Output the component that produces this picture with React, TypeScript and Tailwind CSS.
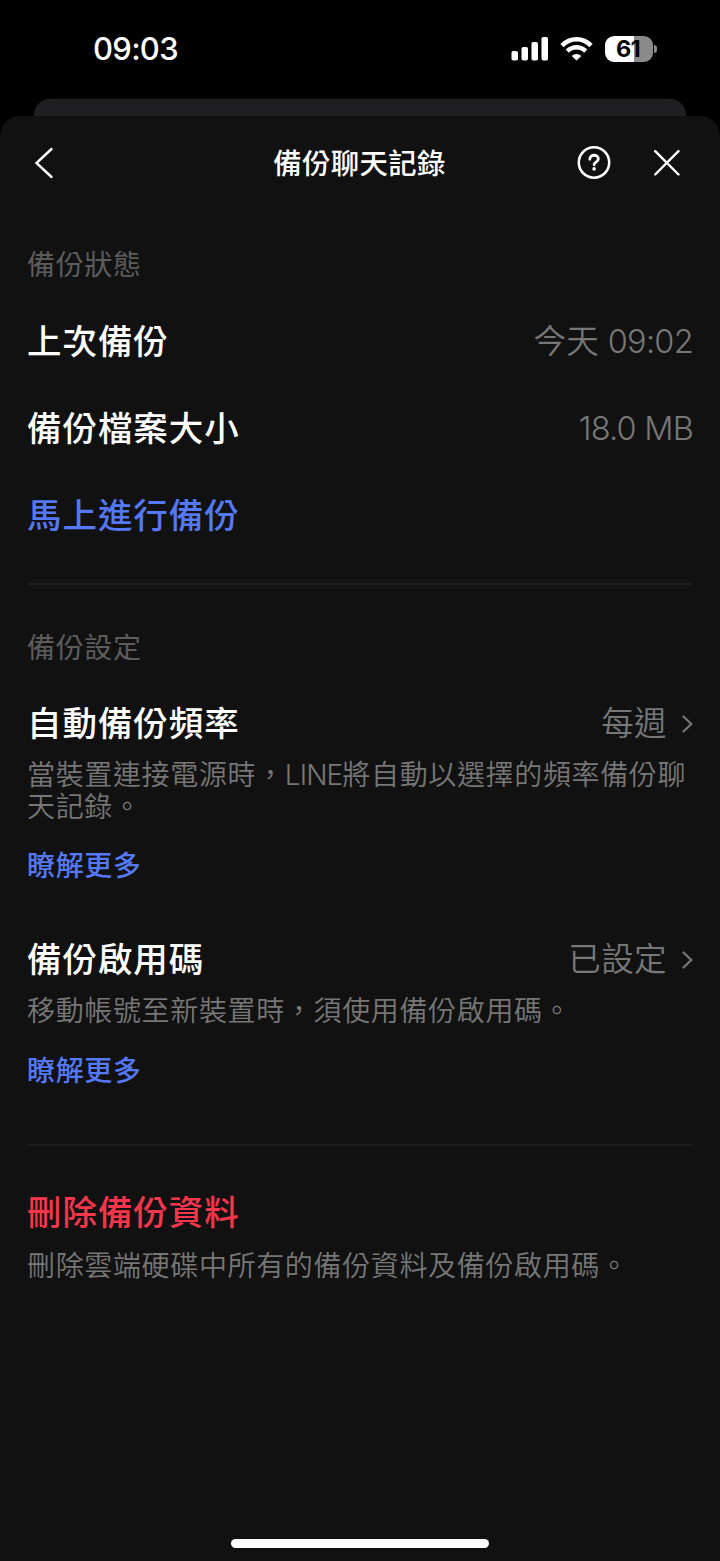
import type { ReactNode } from 'react';

const StatusBar = () => (
  <div className="flex h-[99px] items-start justify-between pl-[93px] pr-[63px] pt-[29px]">
    <div className="h-10 text-[31px] font-[550] leading-10 tracking-[-0.7px] text-white">09:03</div>
    <div className="flex h-10 items-center">
      <svg width="38" height="24" viewBox="0 0 38 24" fill="#fff">
        <rect x="0.5" y="14" width="6.5" height="9.5" rx="1.8" />
        <rect x="10.5" y="10" width="6.5" height="13.5" rx="1.8" />
        <rect x="20.5" y="5" width="6.5" height="18.5" rx="1.8" />
        <rect x="30.5" y="0" width="6.5" height="23.5" rx="1.8" />
      </svg>
      <svg className="ml-[11px]" width="33" height="24" viewBox="0 0 33 24" fill="none" stroke="#fff">
        <path d="M2 8.6 C10 0.2 23 0.2 31 8.6" strokeWidth="4.6" />
        <path d="M7.3 14.1 C12.6 8.9 20.4 8.9 25.7 14.1" strokeWidth="4.4" />
        <path d="M16.5 23.6 L11.7 18.9 C14.3 16.2 18.7 16.2 21.3 18.9 Z" fill="#fff" stroke="none" />
      </svg>
      <div className="ml-3 flex items-center">
        <div className="flex h-[26px] w-12 items-center justify-center rounded-[9px] bg-linear-to-r from-white from-61% to-[#8a8a8a] to-61% pr-[2px] text-[23.5px] font-bold leading-none tracking-[-0.6px] text-black">
          61
        </div>
        <div className="ml-px h-2 w-[3px] rounded-r-full bg-[#8a8a8a]" />
      </div>
    </div>
  </div>
);

const Header = () => (
  <div className="flex h-[94px] items-center justify-between pl-[34px] pr-10">
    <div className="flex w-[108px]">
      <svg width="20" height="32" viewBox="0 0 20 32" fill="none" stroke="#fff" strokeWidth="2.4" strokeLinecap="round">
        <path d="M17.5 2 L2.5 16 L17.5 30" />
      </svg>
    </div>
    <h1 className="pt-px text-[28.4px] font-medium leading-10 tracking-[0.35px] text-white">備份聊天記錄</h1>
    <div className="flex w-[103px] items-center justify-between">
      <svg width="34" height="34" viewBox="0 0 34 34" fill="none" stroke="#fff" strokeWidth="2.5" strokeLinecap="round">
        <circle cx="17" cy="16.5" r="15.2" />
        <path d="M12.8 13.3 C12.8 7.9 21.3 8 21.3 12.9 C21.3 16.2 17.1 16 17.1 18.8" strokeWidth="2.8" />
        <circle cx="17.1" cy="22.9" r="1.8" fill="#fff" stroke="none" />
      </svg>
      <svg width="26" height="26" viewBox="0 0 26 26" fill="none" stroke="#fff" strokeWidth="2.4" strokeLinecap="round">
        <path d="M1.2 1.2 L24.5 24.5 M24.5 1.2 L1.2 24.5" />
      </svg>
    </div>
  </div>
);

const SectionTitle = ({ children }: { children: ReactNode }) => (
  <h2 className="h-10 text-[28px] leading-10 tracking-[0.65px] text-[#5c5c5c]">{children}</h2>
);

const Label = ({ children }: { children: ReactNode }) => (
  <div className="text-[34.5px] font-medium leading-[48px] tracking-[0.95px]">{children}</div>
);

const Value = ({ children }: { children: ReactNode }) => (
  <div className="text-[32.5px] font-[350] leading-[48px] tracking-[0.4px] text-[#777]">{children}</div>
);

const Description = ({ children }: { children: ReactNode }) => (
  <p className="text-[28px] font-[350] leading-8 tracking-[0.65px] text-[#777]">{children}</p>
);

const Chevron = () => (
  <svg className="ml-[15px]" width="11" height="18" viewBox="0 0 11 18" fill="none" stroke="#777" strokeWidth="2.2" strokeLinecap="round">
    <path d="M1.5 1.5 L9.3 9 L1.5 16.5" />
  </svg>
);

const LearnMore = () => (
  <div className="h-10 text-[28px] font-medium leading-10 tracking-[0.65px] text-[#5578f5]">瞭解更多</div>
);

const App = () => {
  return (
    <div
      lang="zh-Hant"
      className="h-[1561px] w-[720px] overflow-hidden bg-black font-['Inter','Noto_Sans_CJK_TC',sans-serif]"
    >
      <StatusBar />
      <div className="mx-[34px] h-[17px] rounded-t-[16px] bg-[#1f1f21]" />
      <div className="flex h-[1445px] flex-col rounded-t-[20px] bg-[#111] text-white">
        <Header />

        <section className="mx-[27px] h-[375px] border-b-2 border-[#1c1c1c] pt-[35px]">
          <SectionTitle>備份狀態</SectionTitle>
          <div className="mt-[13px] flex h-[87px] items-center justify-between">
            <Label>上次備份</Label>
            <Value>
              今天<span className="tracking-[-0.7px]"> 09:02</span>
            </Value>
          </div>
          <div className="flex h-[87px] items-center justify-between">
            <Label>備份檔案大小</Label>
            <Value>
              <span className="tracking-[-0.8px]">18.0 MB</span>
            </Value>
          </div>
          <div className="flex h-[87px] items-center text-[#5578f5]">
            <Label>馬上進行備份</Label>
          </div>
        </section>

        <section className="mx-[27px] h-[561px] border-b-2 border-[#1c1c1c] pt-[43px]">
          <SectionTitle>備份設定</SectionTitle>
          <div className="mt-8 flex h-12 items-center justify-between">
            <Label>自動備份頻率</Label>
            <div className="flex items-center">
              <Value>每週</Value>
              <Chevron />
            </div>
          </div>
          <div className="mt-[11px]">
            <Description>
              當裝置連接電源時，<span className="tracking-[-0.9px]">LINE</span>將自動以選擇的頻率備份聊天記錄。
            </Description>
          </div>
          <div className="mt-[23px]">
            <LearnMore />
          </div>
          <div className="mt-[50px] flex h-12 items-center justify-between">
            <Label>備份啟用碼</Label>
            <div className="flex items-center">
              <Value>已設定</Value>
              <Chevron />
            </div>
          </div>
          <div className="mt-[11px]">
            <Description>移動帳號至新裝置時，須使用備份啟用碼。</Description>
          </div>
          <div className="mt-6">
            <LearnMore />
          </div>
        </section>

        <section className="mx-[27px] pt-[43px]">
          <div className="text-[#f5364c]">
            <Label>刪除備份資料</Label>
          </div>
          <div className="mt-[13px]">
            <Description>刪除雲端硬碟中所有的備份資料及備份啟用碼。</Description>
          </div>
        </section>

        <div className="mb-[13px] mt-auto h-[9px] w-[258px] self-center rounded-full bg-white" />
      </div>
    </div>
  );
};

export default App;
